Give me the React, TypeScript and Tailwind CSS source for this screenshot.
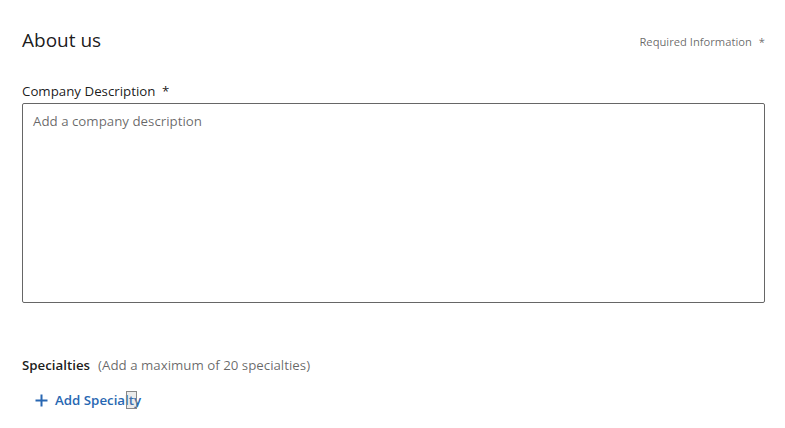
export default function App() {
  return (
    <div className="w-[785px] h-[428px] bg-white font-['Open_Sans',sans-serif] text-[#000000e6] relative overflow-hidden">
      <div className="px-[22px] pr-[20px] pt-[26px]">
        <div className="flex items-start justify-between">
          <h1 className="text-[19px] leading-[28px] text-[#000000e6]">About us</h1>
          <div className="text-[11.2px] leading-[18px] text-[#00000099] mt-[7px] flex gap-[7px]">
            <span>Required Information</span>
            <span>*</span>
          </div>
        </div>

        <label className="block mt-[27px] text-[13.3px] leading-[20px]">
          Company Description <span className="ml-[3px]">*</span>
        </label>
        <textarea
          className="block mt-[2px] w-full h-[200px] border border-[#666666] rounded-[2px] px-[10px] py-[7px] text-[13.3px] leading-[20px] resize-none outline-none placeholder:text-[#00000099]"
          placeholder="Add a company description"
        />

        <div className="mt-[52px] text-[13.3px] leading-[20px]">
          <span className="font-semibold">Specialties</span>
          <span className="ml-[8px] text-[#00000099]">(Add a maximum of 20 specialties)</span>
        </div>

        <button className="mt-[15px] ml-[13px] flex items-center gap-[7px] text-[#2867b2] font-semibold text-[13.3px] leading-[20px]">
          <svg width="13" height="13" viewBox="0 0 13 13" fill="none">
            <path d="M6.5 0.5v12M0.5 6.5h12" stroke="currentColor" strokeWidth="2" />
          </svg>
          <span className="relative">
            Add Specialty
            <span className="absolute left-[71px] top-[1px] w-[11px] h-[18px] border border-[#888] bg-[#9993]" />
          </span>
        </button>
      </div>
    </div>
  );
}
